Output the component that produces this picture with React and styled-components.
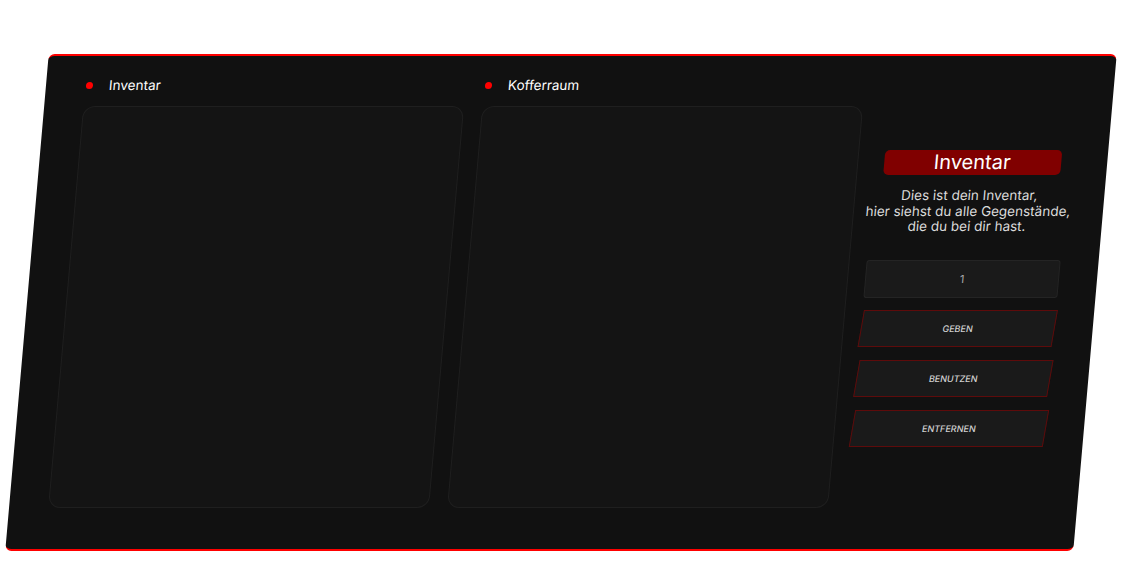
import React from "react";
import styled, { createGlobalStyle } from "styled-components";

const GlobalStyle = createGlobalStyle`
  html, body {
    margin: 0;
    padding: 0;
    background: #ffffff;
  }
  body {
    font-family: "Inter", "Noto Sans", sans-serif;
  }
`;

const Page = styled.div`
  width: 100%;
  height: 564px;
  padding: 54px 0 0 27px;
  box-sizing: border-box;
  display: flex;
  align-items: flex-start;
`;

const Panel = styled.div`
  width: 1068px;
  height: 497px;
  box-sizing: border-box;
  background: #111111;
  border-top: 2px solid #ff0000;
  border-bottom: 2px solid #ff0000;
  border-radius: 6px;
  transform: skewX(-5deg);
  display: flex;
  align-items: flex-start;
  padding: 0 38px 0 39px;
`;

const Section = styled.div`
  width: 381px;
  margin-right: ${({ $gap }) => $gap}px;
  padding-top: 20px;
  display: flex;
  flex-direction: column;
`;

const SectionHeader = styled.div`
  height: 18px;
  display: flex;
  align-items: center;
  gap: 16px;
  padding-left: 1px;
  margin-bottom: 12px;
`;

const Dot = styled.span`
  width: 7px;
  height: 7px;
  border-radius: 50%;
  background: #ff0000;
`;

const SectionTitle = styled.span`
  color: #ffffff;
  font-size: 13.5px;
  font-weight: 400;
`;

const ItemBox = styled.div`
  height: 402px;
  box-sizing: border-box;
  background: #141414;
  border: 1px solid #1f1f1f;
  border-radius: 12px;
`;

const Sidebar = styled.div`
  width: 194px;
  margin-top: 94px;
  display: flex;
  flex-direction: column;
  align-items: center;
`;

const Badge = styled.div`
  width: 177px;
  height: 25px;
  border-radius: 5px;
  background: #800000;
  color: #ffffff;
  font-size: 20px;
  line-height: 25px;
  text-align: center;
`;

const Description = styled.p`
  margin: 13px -20px 0;
  color: #dadada;
  font-size: 13.5px;
  line-height: 15.5px;
  text-align: center;
`;

const AmountField = styled.div`
  width: 100%;
  height: 38px;
  margin-top: 25px;
  box-sizing: border-box;
  background: #1a1a1a;
  border: 1px solid #242424;
  border-radius: 3px;
  display: flex;
  align-items: center;
  justify-content: center;
  color: #a8a8a8;
  font-size: 11px;
`;

const ActionButton = styled.button`
  width: 100%;
  height: 37px;
  margin-top: ${({ $first }) => ($first ? 12 : 13)}px;
  box-sizing: border-box;
  background: #1a1a1a;
  border: 1px solid #5e0b0b;
  border-radius: 0;
  transform: skewX(-5deg);
  color: #d0d0d0;
  font-family: inherit;
  font-size: 9px;
  font-weight: 500;
  text-transform: uppercase;
  cursor: pointer;
`;

const actions = ["Geben", "Benutzen", "Entfernen"];

export default function App() {
  return (
    <>
      <GlobalStyle />
      <Page>
        <Panel>
          <Section $gap={18}>
            <SectionHeader>
              <Dot />
              <SectionTitle>Inventar</SectionTitle>
            </SectionHeader>
            <ItemBox />
          </Section>
          <Section $gap={17}>
            <SectionHeader>
              <Dot />
              <SectionTitle>Kofferraum</SectionTitle>
            </SectionHeader>
            <ItemBox />
          </Section>
          <Sidebar>
            <Badge>Inventar</Badge>
            <Description>
              Dies ist dein Inventar,
              <br />
              hier siehst du alle Gegenstände,
              <br />
              die du bei dir hast.
            </Description>
            <AmountField>1</AmountField>
            {actions.map((label, i) => (
              <ActionButton key={label} $first={i === 0}>
                {label}
              </ActionButton>
            ))}
          </Sidebar>
        </Panel>
      </Page>
    </>
  );
}
